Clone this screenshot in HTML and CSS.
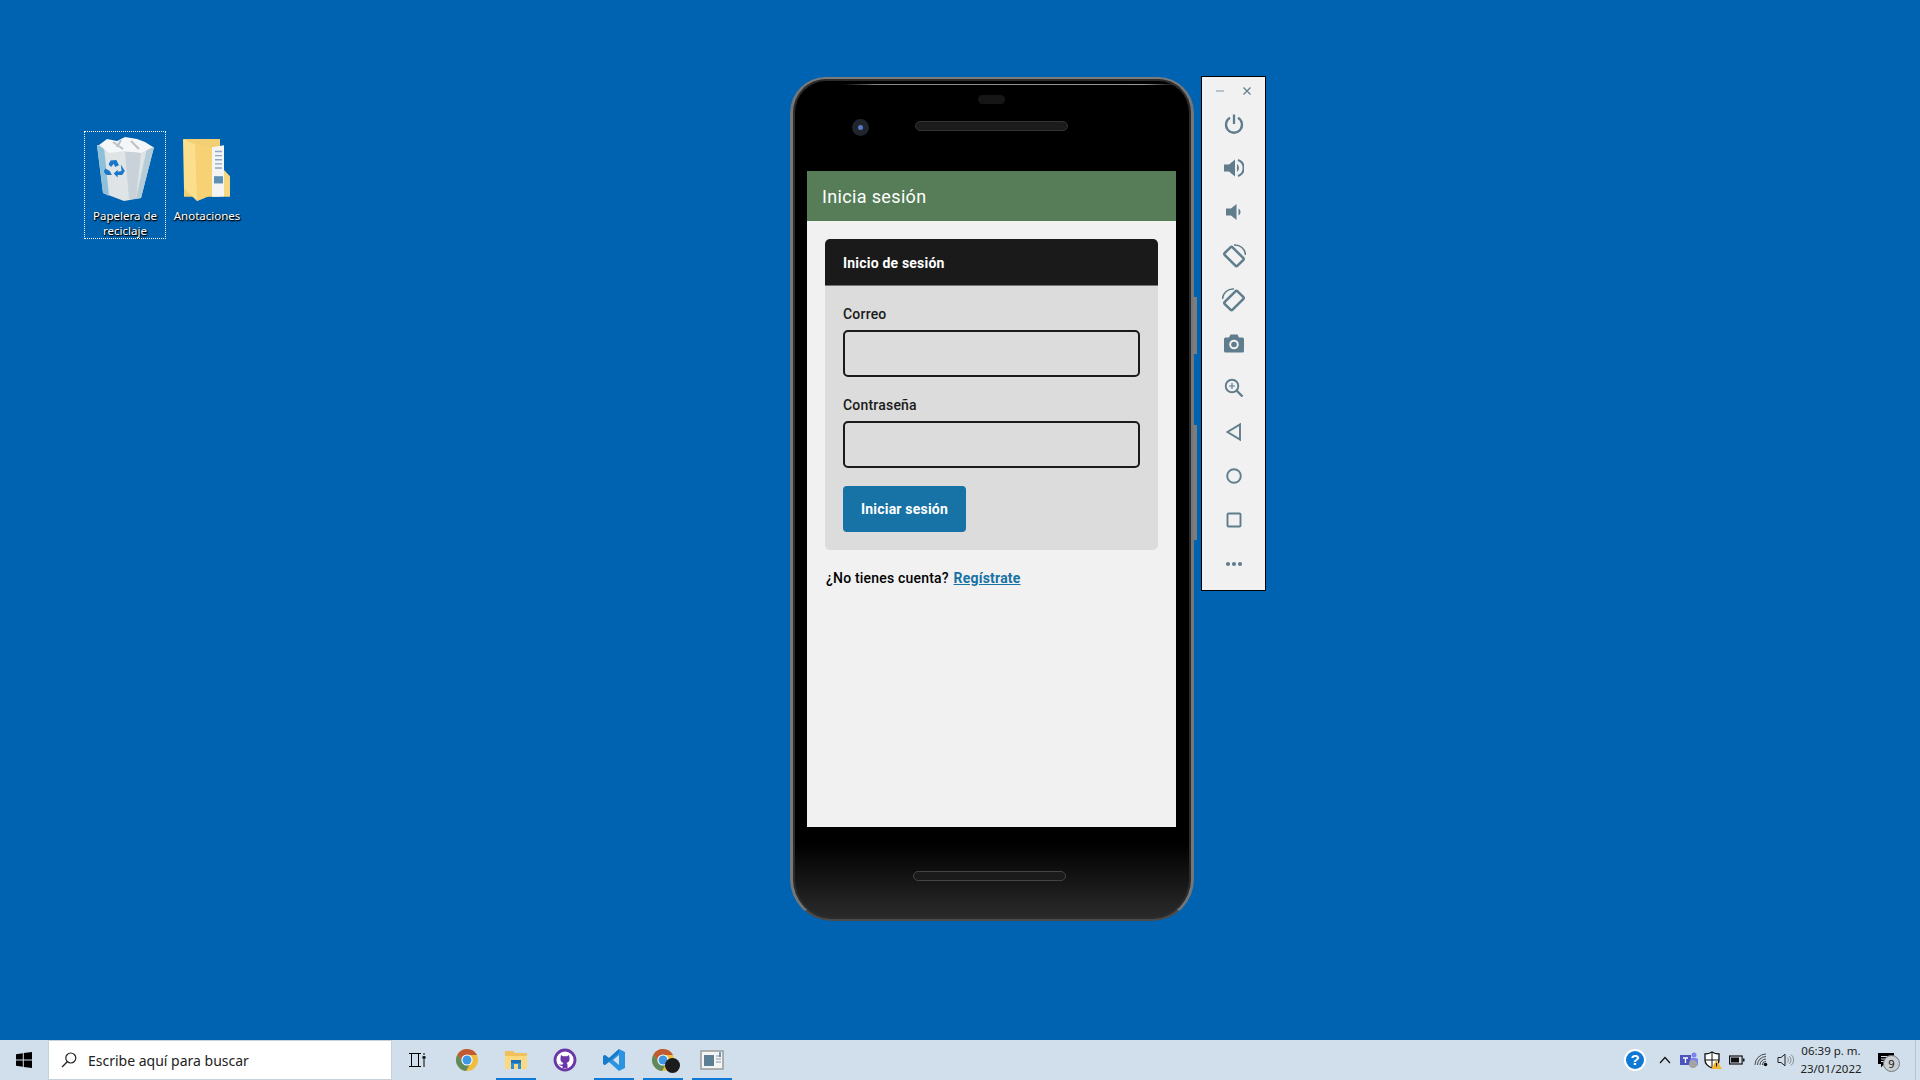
FILE: index.html
```html
<!DOCTYPE html>
<html lang="es">
<head>
    <meta charset="UTF-8">
    <title>Inicia sesión</title>
    <link rel="stylesheet" href="styles.css">
</head>
<body>
    <div class="desktop">
        <div class="desk-icon desk-icon-selected bin-pos">
            <svg class="desk-svg" width="60" height="66" viewBox="0 0 60 66">
                <path d="M2 9 L59 11 L46 62 L29 65 L8 57 Z" fill="#dfe4e7"/>
                <path d="M2 9 L8 57 L14 60 L9 11 Z" fill="#8fc0da"/>
                <path d="M59 11 L46 62 L41 63 L52 12 Z" fill="#b4cbd8"/>
                <path d="M30 16 L34 63 L41 63 L46 16 Z" fill="#c9d2d8"/>
                <path d="M4 9 L12 3 L22 5 L30 1 L42 3 L50 6 L58 11 L46 17 L30 15 L14 17 Z" fill="#f5f6f7"/>
                <path d="M18 6 L28 13 M36 5 L44 13 M26 4 L22 11" stroke="#b9c2c8" stroke-width="2" fill="none"/>
                <g transform="translate(1.200 7.700) scale(.65)">
                    <path d="M22 26 L31 25 L35 33 L29 36 L27 31 L23 36 L19 32 Z" fill="#1a76c8"/>
                    <path d="M38 32 L44 42 L40 48 L33 48 L33 52 L27 46 L33 40 L33 43 L39 42 Z" fill="#1a76c8"/>
                    <path d="M14 38 L21 42 L24 48 L17 48 Q12 46 12 42 Z" fill="#1a76c8"/>
                </g>
            </svg>
            <span class="desk-label">Papelera de reciclaje</span>
        </div>
        <div class="desk-icon folder-pos">
            <svg class="desk-svg" width="50" height="68" viewBox="0 0 50 66" preserveAspectRatio="none">
                <path d="M2 4 L38 4 L38 60 L2 60 Z" fill="#f3cf74"/>
                <path d="M30 12 L42 10 L42 60 L30 60 Z" fill="#f4f4f2"/>
                <path d="M33 16 H40 M33 20 H40 M33 24 H40 M33 28 H40 M33 32 H40" stroke="#8ba9c4" stroke-width="1.4"/>
                <rect x="32" y="40" width="9" height="7" fill="#5b8fb3"/>
                <path d="M1 4 L13 9 L30 13 L30 58 L15 64 L2 52 Z" fill="#fbdf8c"/>
                <path d="M13 9 L30 13 L30 58 L15 64 Z" fill="#f6d274"/>
                <path d="M42 34 L48 40 L48 60 L42 60 Z" fill="#f6d781"/>
            </svg>
            <span class="desk-label">Anotaciones</span>
        </div>

        <div class="phone">
            <span class="side-btn side-btn-power"></span>
            <span class="side-btn side-btn-volume"></span>
            <div class="phone-top">
                <span class="phone-earpiece"></span>
                <span class="phone-camera"><i></i></span>
                <span class="phone-speaker"></span>
            </div>
            <div class="screen">
                <div class="app-bar">Inicia sesión</div>
                <div class="content">
                    <div class="card">
                        <div class="card-header">Inicio de sesión</div>
                        <div class="card-body">
                            <label class="field-label" for="correo">Correo</label>
                            <input class="field-input" id="correo" type="text">
                            <label class="field-label" for="clave">Contraseña</label>
                            <input class="field-input" id="clave" type="password">
                            <button class="login-button">Iniciar sesión</button>
                        </div>
                    </div>
                    <p class="signup">¿No tienes cuenta? <a href="#">Regístrate</a></p>
                </div>
            </div>
            <div class="phone-bottom">
                <span class="phone-speaker"></span>
            </div>
        </div>

        <div class="emu-bar">
            <div class="emu-window">
                <svg width="10" height="10" viewBox="0 0 10 10"><path d="M1 5 H9" stroke="#9fb0b8" stroke-width="1.4"/></svg>
                <svg width="10" height="10" viewBox="0 0 10 10"><path d="M1.500 1.500 L8.500 8.500 M8.500 1.500 L1.500 8.500" stroke="#5f7d8c" stroke-width="1.200"/></svg>
            </div>
            <svg class="emu-tool" viewBox="0 0 20 20"><path d="M6 3.800 A8 8 0 1 0 14 3.800" fill="none" stroke="#5f7d8c" stroke-width="2.300"/><path d="M10 .5 V10" stroke="#5f7d8c" stroke-width="2.300"/></svg>
            <svg class="emu-tool" viewBox="0 0 20 20"><path d="M0 6.500 H5 L11 1.500 V18.500 L5 13.500 H0 Z" fill="#5f7d8c"/><path d="M13 6 A5 5 0 0 1 13 14 Z" fill="#5f7d8c"/><path d="M14 2 A8.500 8.500 0 0 1 14 18" fill="none" stroke="#5f7d8c" stroke-width="2"/></svg>
            <svg class="emu-tool" viewBox="0 0 20 20"><path d="M2 6.500 H7 L12.500 2 V18 L7 13.500 H2 Z" fill="#5f7d8c"/><path d="M14.500 6.500 A4 4 0 0 1 14.500 13.500 Z" fill="#5f7d8c"/></svg>
            <svg class="emu-tool emu-rotate" viewBox="0 0 24 24"><rect x="3" y="7" width="18" height="11" rx="1.500" transform="rotate(45 12 12.500)" fill="none" stroke="#5f7d8c" stroke-width="2.500"/><path d="M12 1 A10.500 10.500 0 0 1 23.500 11" fill="none" stroke="#5f7d8c" stroke-width="1.500"/></svg>
            <svg class="emu-tool emu-rotate" viewBox="0 0 24 24"><rect x="3" y="7" width="18" height="11" rx="1.500" transform="rotate(-45 12 12.500)" fill="none" stroke="#5f7d8c" stroke-width="2.500"/><path d="M12 1 A10.500 10.500 0 0 0 .5 11" fill="none" stroke="#5f7d8c" stroke-width="1.500"/></svg>
            <svg class="emu-tool" viewBox="0 0 20 20"><path d="M0 5 Q0 3.500 1.500 3.500 H5 L6.500 .5 H13.500 L15 3.500 H18.500 Q20 3.500 20 5 V17 Q20 18.500 18.500 18.500 H1.500 Q0 18.500 0 17 Z" fill="#5f7d8c"/><circle cx="10" cy="10.500" r="4.800" fill="#f1f1f1"/><circle cx="10" cy="10.500" r="2.800" fill="#5f7d8c"/></svg>
            <svg class="emu-tool" viewBox="0 0 20 20"><circle cx="8" cy="8" r="6.300" fill="none" stroke="#5f7d8c" stroke-width="1.900"/><path d="M12.500 12.500 L18.500 18.500" stroke="#5f7d8c" stroke-width="2.400"/><path d="M5 8 H11 M8 5 V11" stroke="#5f7d8c" stroke-width="1.200"/></svg>
            <svg class="emu-tool" viewBox="0 0 20 20"><path d="M16 2.500 V17.500 L3.500 10 Z" fill="none" stroke="#5f7d8c" stroke-width="1.900"/></svg>
            <svg class="emu-tool" viewBox="0 0 20 20"><circle cx="10" cy="10" r="6.800" fill="none" stroke="#5f7d8c" stroke-width="1.900"/></svg>
            <svg class="emu-tool" viewBox="0 0 20 20"><rect x="3.500" y="3.500" width="13" height="13" rx="1" fill="none" stroke="#5f7d8c" stroke-width="1.900"/></svg>
            <svg class="emu-tool" viewBox="0 0 20 20"><circle cx="4" cy="10" r="2.100" fill="#5f7d8c"/><circle cx="10" cy="10" r="2.100" fill="#5f7d8c"/><circle cx="16" cy="10" r="2.100" fill="#5f7d8c"/></svg>
        </div>
    </div>

    <div class="taskbar">
        <div class="start">
            <svg width="16" height="16" viewBox="0 0 16 16"><path d="M0 2.200 L6.800 1.200 V7.500 H0 Z M7.800 1.100 L16 0 V7.500 H7.800 Z M0 8.500 H6.800 V14.800 L0 13.800 Z M7.800 8.500 H16 V16 L7.800 14.900 Z" fill="#000"/></svg>
        </div>
        <div class="search">
            <svg width="16" height="16" viewBox="0 0 16 16"><circle cx="9.800" cy="6" r="5" fill="none" stroke="#222" stroke-width="1.200"/><path d="M6.300 9.700 L1 15" stroke="#222" stroke-width="1.300"/></svg>
            <span>Escribe aquí para buscar</span>
        </div>
        <div class="task-items">
            <div class="task-item">
                <svg width="17" height="16" viewBox="0 0 17 16"><path d="M0 1.500 H12 M0 14.500 H12 M2.500 1.500 V14.500 M9.500 1.500 V14.500 M15 1 V3 M15 7 V15" fill="none" stroke="#000" stroke-width="1"/><rect x="13.500" y="4.200" width="3" height="2.500" fill="#000"/></svg>
            </div>
            <div class="task-item">
                <svg class="app-icon" viewBox="0 0 24 24"><use href="#chrome"/></svg>
            </div>
            <div class="task-item task-item-open">
                <svg class="app-icon" viewBox="0 0 24 24"><path d="M1 3 H9 L11 5 H23 V21 H1 Z" fill="#f0c15a"/><path d="M1 8 H23 V21 H1 Z" fill="#fad981"/><path d="M7 12 H17 V21 H14 V16 H10 V21 H7 Z" fill="#2b8ed6"/><path d="M7 12 H17 V15 H7 Z" fill="#1a6fb5"/></svg>
            </div>
            <div class="task-item">
                <svg class="app-icon" viewBox="0 0 24 24"><circle cx="12" cy="12" r="10" fill="#fff" stroke="#6b36a6" stroke-width="2.800"/><path d="M8 7 L10 8.300 H14 L16 7 L16.500 10 Q17 14 13.500 15 Q14.500 16 14.500 17 V20 H9.500 V18 Q7 18.500 6 16 Q8 17 9.500 16.500 Q9.800 15.500 10.500 15 Q7 14 7.500 10 Z" fill="#6b36a6"/></svg>
            </div>
            <div class="task-item task-item-open">
                <svg class="app-icon" viewBox="0 0 24 24"><path d="M17 1 L23 4 V20 L17 23 L7 14 L3 17 L1 16 V8 L3 7 L7 10 Z M17 7 L11 12 L17 17 Z" fill="#2b93e0"/><path d="M17 1 L7 10 L3 7 L1 8 V16 L3 17 L17 5 Z" fill="#1272c4" opacity=".75"/></svg>
            </div>
            <div class="task-item task-item-open">
                <svg class="app-icon" viewBox="0 0 24 24"><use href="#chrome"/></svg>
                <span class="task-badge"></span>
            </div>
            <div class="task-item task-item-open">
                <svg class="app-icon" viewBox="0 0 24 24"><rect x="1" y="3" width="22" height="18" fill="#f3f4f4" stroke="#9b9b9b" stroke-width="1.500"/><rect x="4" y="7" width="10" height="11" fill="#5d7f95"/><path d="M16 8 H21 M16 11 H21 M16 14 H21" stroke="#8b9aa3" stroke-width="1.200"/><path d="M20 4 V9" stroke="#3f7fb5" stroke-width="1.500"/></svg>
            </div>
        </div>
        <div class="tray">
            <svg class="tray-help" width="22" height="22" viewBox="0 0 22 22"><circle cx="11" cy="11" r="11" fill="#fff"/><circle cx="11" cy="11" r="9" fill="#0f7ad6"/><text x="11" y="16" text-anchor="middle" class="help-mark">?</text></svg>
            <div class="tray-item tray-caret"><svg width="12" height="8" viewBox="0 0 12 8"><path d="M1 7 L6 1.500 L11 7" fill="none" stroke="#111" stroke-width="1.200"/></svg></div>
            <div class="tray-item"><svg width="18" height="16" viewBox="0 0 18 16"><rect x="0" y="3" width="11" height="10" fill="#4b53bc"/><circle cx="14" cy="3" r="2.500" fill="#7b83eb"/><rect x="10" y="6" width="8" height="8" rx="2" fill="#7b83eb"/><circle cx="13" cy="12" r="4" fill="#a3a3a3"/><path d="M3 6 H8 M5.500 6 V11" stroke="#fff" stroke-width="1.300"/></svg></div>
            <div class="tray-item"><svg width="18" height="18" viewBox="0 0 18 18"><path d="M8 1 Q11 3 15 3 V9 Q15 14 8 17 Q1 14 1 9 V3 Q5 3 8 1 Z" fill="#fff" stroke="#111" stroke-width="1.300"/><path d="M8 1 V17 M1 9 H15" stroke="#111" stroke-width="1"/><path d="M12.500 9 L18 18 H7 Z" fill="#f2b632"/><path d="M12.500 12 V15.500" stroke="#111" stroke-width="1.100"/></svg></div>
            <div class="tray-item"><svg width="16" height="10" viewBox="0 0 16 10"><rect x=".6" y="1" width="12.500" height="8" fill="none" stroke="#111" stroke-width="1.200"/><rect x="2" y="2.500" width="8" height="5" fill="#111"/><rect x="14" y="3.500" width="1.500" height="3" fill="#111"/></svg></div>
            <div class="tray-item"><svg width="14" height="14" viewBox="0 0 14 14"><path d="M1 12 A11 11 0 0 1 12 1 M3.500 12 A8.500 8.500 0 0 1 12 3.500 M6 12 A6 6 0 0 1 12 6 M8.300 12 A3.700 3.700 0 0 1 12 8.300" fill="none" stroke="#222" stroke-width=".8"/><circle cx="11.500" cy="11.500" r="1.800" fill="#111"/></svg></div>
            <div class="tray-item"><svg width="17" height="14" viewBox="0 0 17 14"><path d="M1 4.500 H4 L8 1.200 V12.800 L4 9.500 H1 Z" fill="none" stroke="#222" stroke-width="1"/><path d="M10 4.500 A3 3 0 0 1 10 9.500 M12 3 A5 5 0 0 1 12 11 M14 1.500 A7 7 0 0 1 14 12.500" fill="none" stroke="#8b8f92" stroke-width="1"/></svg></div>
            <div class="clock">
                <span>06:39 p. m.</span>
                <span>23/01/2022</span>
            </div>
            <div class="notify">
                <svg width="17" height="15" viewBox="0 0 17 15"><path d="M0 0 H16 V11 H6 L3 14.500 V11 H0 Z" fill="#000"/><path d="M3 3.500 H13 M3 6 H13 M3 8.500 H10" stroke="#d0dfeb" stroke-width="1"/></svg>
                <span class="notify-count">9</span>
            </div>
        </div>
    </div>

    <svg class="defs">
        <defs>
            <symbol id="chrome" viewBox="0 0 24 24">
                <circle cx="12" cy="12" r="11" fill="#f1bd3f"/>
                <path d="M12 1 A11 11 0 0 0 2.500 6.500 L7.500 14 L12 7 H22 A11 11 0 0 0 12 1 Z" fill="#bf5a33"/>
                <path d="M2.500 6.500 A11 11 0 0 0 11 23 L15 16 H9 Z" fill="#5e8a5e"/>
                <circle cx="12" cy="12" r="5.600" fill="#fff"/>
                <circle cx="12" cy="12" r="4.500" fill="#3f98e6"/>
            </symbol>
        </defs>
    </svg>
</body>
</html>
```

FILE: styles.css
```css
* {
    box-sizing: border-box;
}

html, body {
    height: 100%;
}

body {
    margin: 0;
    display: flex;
    flex-direction: column;
    overflow: hidden;
    background-color: #0063b1;
    font-family: Roboto, sans-serif;
}

.defs {
    position: absolute;
    width: 0;
    height: 0;
}

.desktop {
    position: relative;
    flex: 1;
}

/* desktop icons */
.desk-icon {
    position: absolute;
    width: 82px;
    display: flex;
    flex-direction: column;
    align-items: center;
    color: white;
    font-family: "Noto Sans", sans-serif;
    font-size: 11.5px;
    line-height: 15px;
    text-align: center;
    text-shadow: 1px 1px 1px #000, 0 1px 2px #000;
}

.desk-icon-selected {
    outline: 1px dotted white;
    outline-offset: -1px;
}

.bin-pos {
    left: 84px;
    top: 131px;
    height: 108px;
    padding-top: 5px;
}

.folder-pos {
    left: 166px;
    top: 131px;
    height: 108px;
    padding-top: 4px;
}

.desk-svg {
    flex-shrink: 0;
}

.desk-label {
    margin-top: 6px;
    width: 76px;
}

.folder-pos .desk-label {
    margin-top: 5px;
}

/* phone */
.phone {
    position: absolute;
    left: 790px;
    top: 77px;
    width: 404px;
    height: 844px;
    padding: 0 16px;
    display: flex;
    flex-direction: column;
    border-style: solid;
    border-width: 2px 3px;
    border-color: #7c7c7c #767676 #4a4a4a;
    border-radius: 36px 36px 42px 42px;
    background: linear-gradient(to bottom, #000 0, #000 91%, #222 98%, #2a2a2a 100%);
    box-shadow: inset 0 0 0 2px #2c2c2c;
}

.phone::before {
    content: "";
    position: absolute;
    left: 50px;
    right: 14px;
    top: 5px;
    height: 1px;
    background: linear-gradient(to right, transparent, #888 10%, #999 90%, transparent);
}

.side-btn {
    position: absolute;
    right: -6px;
    width: 4px;
    background-color: #7d7d7d;
}

.side-btn-power {
    top: 218px;
    height: 57px;
}

.side-btn-volume {
    top: 346px;
    height: 115px;
}

.phone-top {
    position: relative;
    height: 92px;
    margin: 0 -15px;
}

.phone-earpiece {
    position: absolute;
    left: 184px;
    top: 16px;
    width: 27px;
    height: 9px;
    border-radius: 5px;
    background-color: #161616;
}

.phone-camera {
    position: absolute;
    left: 58px;
    top: 40px;
    width: 17px;
    height: 17px;
    border-radius: 50%;
    background-color: #20242c;
    display: flex;
    align-items: center;
    justify-content: center;
}

.phone-camera i {
    width: 5px;
    height: 5px;
    border-radius: 50%;
    background-color: #5a78c8;
}

.phone-speaker {
    position: absolute;
    width: 153px;
    height: 10px;
    border-radius: 5px;
    background-color: #1b1b1b;
    border: 1px solid #333;
}

.phone-top .phone-speaker {
    left: 121px;
    top: 42px;
}

.screen {
    height: 656px;
    margin: 0 -1px 0 -2px;
    flex-shrink: 0;
    background-color: #f1f1f1;
    display: flex;
    flex-direction: column;
}

.phone-bottom {
    position: relative;
    margin: 0 -15px;
    flex: 1;
}

.phone-bottom .phone-speaker {
    left: 119px;
    top: 44px;
    border-color: #444;
}

/* app inside the phone */
.app-bar {
    height: 50px;
    padding-left: 15px;
    display: flex;
    align-items: center;
    background-color: #567d57;
    color: white;
    font-size: 18px;
    font-weight: 400;
    letter-spacing: 0.35px;
}

.content {
    padding: 18px;
}

.card {
    border-radius: 5px;
    overflow: hidden;
}

.card-header {
    height: 47px;
    padding: 1px 0 0 18px;
    display: flex;
    align-items: center;
    background-color: #1a1a1a;
    border-bottom: 1px solid #777;
    color: white;
    font-size: 14px;
    font-weight: 700;
    letter-spacing: 0.2px;
}

.card-body {
    padding: 18px;
    display: flex;
    flex-direction: column;
    align-items: flex-start;
    background-color: #dcdcdc;
}

.field-label {
    height: 26px;
    color: #1a1a1a;
    font-size: 14px;
    font-weight: 500;
    line-height: 20px;
    letter-spacing: 0.2px;
}

.field-input {
    width: 100%;
    height: 47px;
    margin-bottom: 18px;
    background-color: #dcdcdc;
    border: 2px solid #1a1a1a;
    border-radius: 5px;
}

.login-button {
    width: 123px;
    height: 46px;
    border: none;
    border-radius: 4px;
    background-color: #1772a5;
    color: white;
    font-family: Roboto, sans-serif;
    font-size: 14px;
    font-weight: 700;
    letter-spacing: 0.2px;
}

.signup {
    margin: 18px 0 0;
    padding-left: 1px;
    color: #000;
    font-size: 14px;
    font-weight: 500;
    line-height: 20px;
    letter-spacing: 0.2px;
}

.signup a {
    margin-left: 1px;
    color: #1772a5;
    font-weight: 700;
}

/* emulator toolbar */
.emu-bar {
    position: absolute;
    left: 1201px;
    top: 76px;
    width: 65px;
    height: 515px;
    padding-top: 9px;
    display: flex;
    flex-direction: column;
    align-items: center;
    gap: 24px;
    background-color: #f1f1f1;
    border: 1.5px solid #000;
}

.emu-window {
    width: 100%;
    height: 10px;
    margin-bottom: -6px;
    padding: 0 13px;
    display: flex;
    justify-content: space-between;
}

.emu-tool {
    width: 20px;
    height: 20px;
    flex-shrink: 0;
}

.emu-rotate {
    width: 24px;
    height: 24px;
    margin: -2px 0;
}

/* taskbar */
.taskbar {
    height: 40px;
    display: flex;
    align-items: stretch;
    background-color: #d0dfeb;
    color: #111;
    font-family: "Noto Sans", sans-serif;
}

.start {
    width: 48px;
    display: flex;
    align-items: center;
    justify-content: center;
}

.search {
    width: 344px;
    padding-left: 12px;
    display: flex;
    align-items: center;
    gap: 11px;
    background-color: white;
    border: 1px solid #c4d0da;
    font-size: 14px;
    color: #222;
}

.task-items {
    display: flex;
    margin-left: 1px;
}

.task-item {
    position: relative;
    width: 49px;
    display: flex;
    align-items: center;
    justify-content: center;
}

.task-item-open::after {
    content: "";
    position: absolute;
    left: 5px;
    right: 4px;
    bottom: 0;
    height: 2px;
    background-color: #0f7ad6;
}

.app-icon {
    width: 24px;
    height: 24px;
}

.task-badge {
    position: absolute;
    left: 27px;
    top: 18px;
    width: 15px;
    height: 15px;
    border-radius: 50%;
    background-color: #1c1c1c;
}

.tray {
    margin-left: auto;
    display: flex;
    align-items: center;
    padding-right: 5px;
    border-right: 1px solid #b6c4cf;
    margin-right: 4px;
}

.tray-help {
    margin-right: 7px;
}

.tray-item {
    width: 24px;
    display: flex;
    align-items: center;
    justify-content: center;
}

.help-mark {
    fill: white;
    font-family: "Liberation Sans", sans-serif;
    font-size: 15px;
    font-weight: 700;
}

.clock {
    width: 62px;
    margin-left: 3px;
    display: flex;
    flex-direction: column;
    align-items: center;
    gap: 2px;
    font-size: 11.5px;
    line-height: 16px;
    color: #222;
    white-space: nowrap;
}

.notify {
    position: relative;
    width: 48px;
    display: flex;
    justify-content: center;
}

.notify-count {
    position: absolute;
    left: 21px;
    top: 2px;
    width: 17px;
    height: 17px;
    border-radius: 50%;
    border: 1px solid #777;
    background-color: #c9cfd3;
    font-size: 11px;
    line-height: 15px;
    text-align: center;
}
```
